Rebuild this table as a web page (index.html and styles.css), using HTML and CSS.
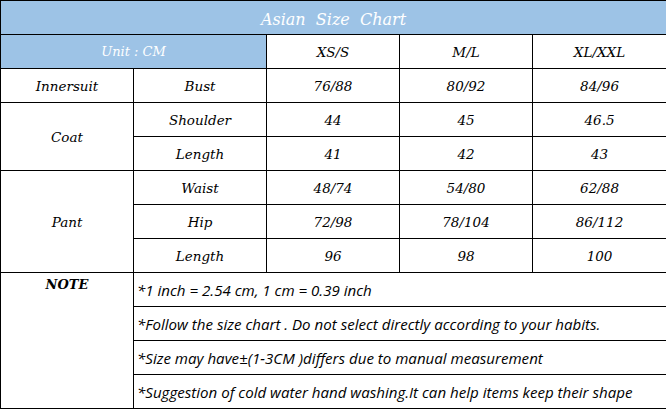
FILE: index.html
```html
<!DOCTYPE html>
<html>
<head>
<meta charset="utf-8">
<link rel="stylesheet" href="styles.css">
</head>
<body>
<table class="chart">
  <colgroup>
    <col class="c1"><col class="c2"><col class="c3"><col class="c4"><col class="c5">
  </colgroup>
  <tr><td class="title" colspan="5">Asian&nbsp; Size&nbsp; Chart</td></tr>
  <tr>
    <td class="unit" colspan="2">Unit : CM</td>
    <td>XS/S</td><td>M/L</td><td>XL/XXL</td>
  </tr>
  <tr><td>Innersuit</td><td>Bust</td><td>76/88</td><td>80/92</td><td>84/96</td></tr>
  <tr><td rowspan="2">Coat</td><td>Shoulder</td><td>44</td><td>45</td><td>46.5</td></tr>
  <tr><td>Length</td><td>41</td><td>42</td><td>43</td></tr>
  <tr><td rowspan="3">Pant</td><td>Waist</td><td>48/74</td><td>54/80</td><td>62/88</td></tr>
  <tr><td>Hip</td><td>72/98</td><td>78/104</td><td>86/112</td></tr>
  <tr><td>Length</td><td>96</td><td>98</td><td>100</td></tr>
  <tr><td class="note-label" rowspan="4">NOTE</td><td class="note" colspan="4">*1 inch = 2.54 cm, 1 cm = 0.39 inch</td></tr>
  <tr><td class="note" colspan="4">*Follow the size chart . Do not select directly according to your habits.</td></tr>
  <tr><td class="note" colspan="4">*Size may have±(1-3CM )differs due to manual measurement</td></tr>
  <tr><td class="note" colspan="4">*Suggestion of cold water hand washing.It can help items keep their shape</td></tr>
</table>
</body>
</html>
```
FILE: styles.css
```css
html, body {
  margin: 0;
  padding: 0;
  background: #ffffff;
}
.chart {
  border-collapse: collapse;
  table-layout: fixed;
  width: 666px;
  font-family: "DejaVu Serif", serif;
  font-style: italic;
  font-size: 13.5px;
  color: #000;
}
.c1, .c2, .c3, .c4 { width: 133px; }
.c5 { width: 134px; }
.chart tr { height: 34px; }
.chart td {
  border: 1px solid #000;
  padding: 0;
  text-align: center;
  vertical-align: middle;
  line-height: 16px;
}
.chart .title {
  background: #9dc3e6;
  color: #fff;
  font-size: 16px;
  padding-top: 4px;
}
.chart .unit {
  background: #9dc3e6;
  color: #fff;
  font-size: 13px;
}
.chart .note-label {
  vertical-align: top;
  font-weight: bold;
  font-size: 13px;
  padding-top: 4px;
}
.chart .note {
  text-align: left;
  padding-left: 3px;
  font-family: "Open Sans", sans-serif;
  font-size: 15.1px;
}
```
